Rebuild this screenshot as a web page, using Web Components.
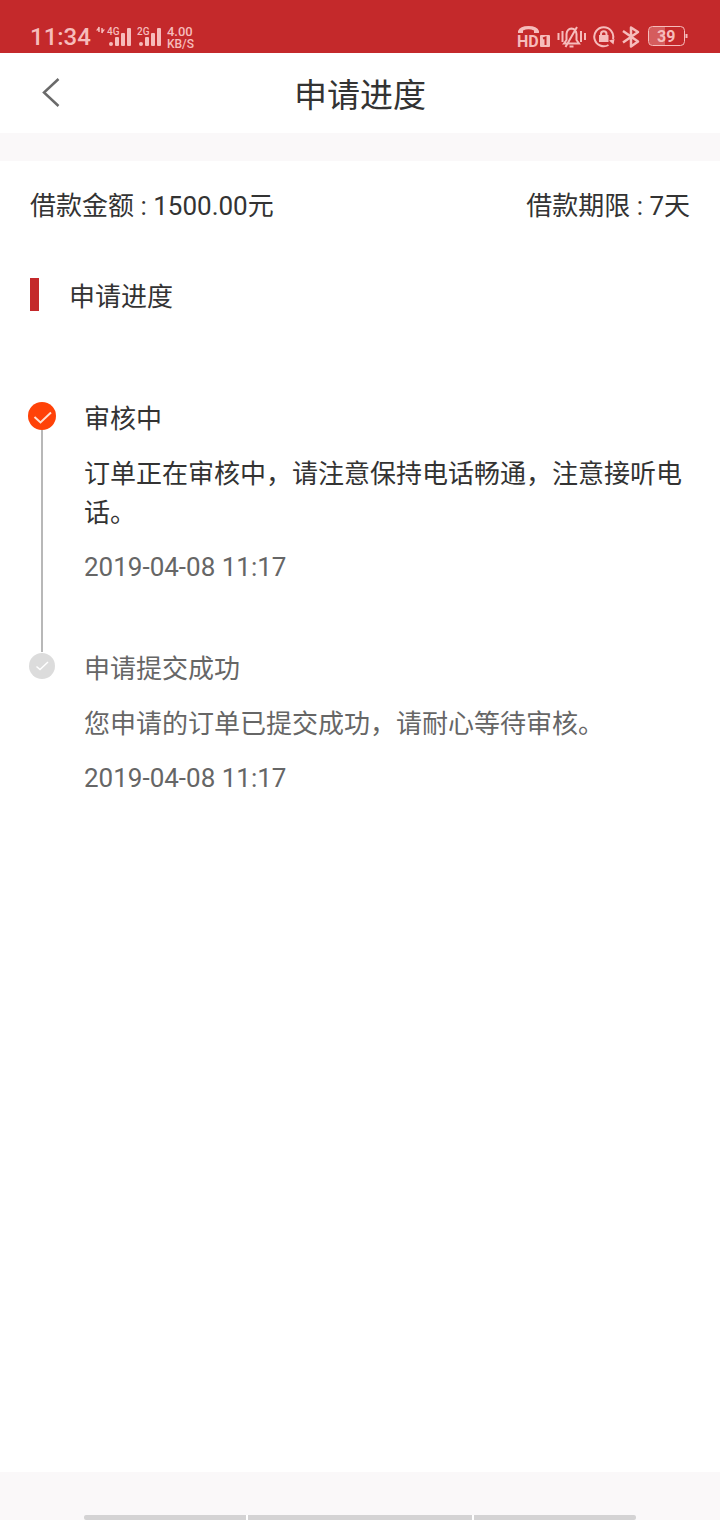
<!DOCTYPE html>
<html lang="zh-CN">
<head>
<meta charset="utf-8">
<meta name="viewport" content="width=device-width, initial-scale=1">
<title>申请进度</title>
<style>
  body {
    margin: 0;
    background: #faf8f9;
    color: #333;
    font: 26px/39px Roboto, "Noto Sans CJK SC", sans-serif;
  }
</style>
</head>
<body>
<progress-page></progress-page>

<script>
class StatusSignal extends HTMLElement {
    constructor() {
        super();
        this.attachShadow({ mode: "open" });
    }

    connectedCallback() {
        const label = this.getAttribute("label");
        const arrows = this.hasAttribute("active")
            ? `<path d="M3 4v5M6 5v5" stroke="currentColor" stroke-width="1.500"/><path d="M0 7.500l3-4v4zM9 6.500l-3 4v-4z"/>`
            : "";
        const width = arrows ? 36 : 25;
        const x = arrows ? 11 : 0;
        this.shadowRoot.innerHTML = `
      <style>
        :host { display: block; height: 28px; }
        svg { display: block; fill: currentColor; }
        text { font: 500 10px Roboto, sans-serif; }
      </style>
      <svg width="${width}" height="28" viewBox="0 0 ${width} 28">
        ${arrows}
        <g transform="translate(${x} 0)">
          <text x="0" y="12">${label}</text>
          <rect x="2" y="19" width="4" height="4" rx="2"/>
          <rect x="8" y="14" width="4" height="9" rx="1"/>
          <rect x="14" y="10" width="4" height="13" rx="1"/>
          <rect x="20" y="5" width="4" height="18" rx="1"/>
        </g>
      </svg>
    `;
    }
}

class StatusBar extends HTMLElement {
    constructor() {
        super();
        this.attachShadow({ mode: "open" });
        this.shadowRoot.innerHTML = `
      <style>
        :host {
          display: flex;
          justify-content: space-between;
          padding: 23px 32px 2px 30px;
          background: #c4292b;
          color: #f6bcbb;
          line-height: 28px;
        }
        .side { display: flex; }
        .left { gap: 5px; }
        .right { gap: 7px; }
        .time { font-size: 24px; font-weight: 500; }
        .speed { display: flex; flex-direction: column; font-size: 13px; font-weight: 500; line-height: 13px; padding-top: 2px; }
        .speed .unit { font-size: 12px; line-height: 12px; }
        svg { display: block; fill: none; stroke: currentColor; stroke-width: 2; }
        text { font-family: Roboto, sans-serif; font-weight: 700; font-size: 16px; fill: currentColor; stroke: none; }
        .fill { fill: currentColor; stroke: none; }
      </style>
      <div class="side left">
        <span class="time">11:34</span>
        <status-signal label="4G" active></status-signal>
        <status-signal label="2G"></status-signal>
        <span class="speed"><span>4.00</span><span class="unit">KB/S</span></span>
      </div>
      <div class="side right">
        <!-- HD voice -->
        <svg width="33" height="28" viewBox="0 0 33 28">
          <path class="fill" d="M1 8Q3 3 11.500 3T22 8V10H17V7.500Q11.500 5 6 7.500V10H1Z"/>
          <text x="0" y="24">HD</text>
          <rect class="fill" x="23" y="12" width="10" height="12" rx="1"/>
          <path d="M26 15.500L28.500 14.500V22" stroke="#c4292b"/>
        </svg>
        <!-- silent -->
        <svg width="29" height="28" viewBox="0 0 29 28">
          <path d="M1.500 10v7M5.500 8v11M24 8v11M28 10v7"/>
          <path d="M7 20.500L9.500 17V11Q10 6 14.500 5.500Q19 6 19.500 11V17L22 20.500ZM12.500 23.500h4M20 4L8.500 24"/>
        </svg>
        <!-- rotation lock -->
        <svg width="22" height="28" viewBox="0 0 22 28">
          <path d="M15.500 22A9.500 9.500 0 1 1 20 16"/>
          <path class="fill" d="M16 17.500l5.500-1.500-1 5.500zM6 12h9.500v7H6z"/>
          <path d="M8 12.500V11a2.700 2.700 0 0 1 5.500 0v1.500"/>
        </svg>
        <!-- bluetooth -->
        <svg width="19" height="28" viewBox="0 0 19 28" stroke-linejoin="round">
          <path stroke-width="2.500" d="M1 8L16 18.500L9 23.500V4.500L16 9L1 19.500"/>
        </svg>
        <!-- battery -->
        <svg width="40" height="28" viewBox="0 0 40 28">
          <path class="fill" d="M5 4H17V22H5Q1 22 1 18V8Q1 4 5 4Z" opacity=".35"/>
          <rect x="0.500" y="3.500" width="36" height="19" rx="4" style="stroke-width: 1px"/>
          <path d="M38.500 11v4"/>
          <text x="9" y="19">39</text>
        </svg>
      </div>
    `;
    }
}

class NavHeader extends HTMLElement {
    constructor() {
        super();
        this.attachShadow({ mode: "open" });
        this.shadowRoot.innerHTML = `
      <style>
        :host {
          display: grid;
          grid-template-columns: 100px 1fr 100px;
          background: #fff;
        }
        button {
          display: flex;
          align-items: center;
          padding: 0 0 0 40px;
          border: 0;
          background: none;
          color: #6a6a6a;
          cursor: pointer;
        }
        h1 { margin: 0; padding-top: 6px; font-size: 33px; font-weight: 400; line-height: 74px; text-align: center; }
      </style>
      <button type="button" aria-label="返回">
        <svg width="22" height="32" viewBox="0 0 22 32" fill="none" stroke="currentColor" stroke-width="2.500">
          <path d="M18.500 2L4 15.500L18.500 29"/>
        </svg>
      </button>
      <h1><slot></slot></h1>
    `;
    }
}

class LoanSummary extends HTMLElement {
    constructor() {
        super();
        this.attachShadow({ mode: "open" });
        this.shadowRoot.innerHTML = `
      <style>
        :host { display: flex; justify-content: space-between; padding: 26px 30px 0; }
      </style>
      <slot></slot>
    `;
    }
}

class SectionTitle extends HTMLElement {
    constructor() {
        super();
        this.attachShadow({ mode: "open" });
        this.shadowRoot.innerHTML = `
      <style>
        :host { display: block; padding: 52px 30px 0; }
        h2 { display: flex; gap: 30px; margin: 0; font-size: 26px; font-weight: 400; }
        h2::before { content: ""; width: 9px; height: 33px; background: #c4292b; }
      </style>
      <h2><slot></slot></h2>
    `;
    }
}

class TimelineStep extends HTMLElement {
    constructor() {
        super();
        this.attachShadow({ mode: "open" });
    }

    connectedCallback() {
        const icon = this.hasAttribute("current")
            ? `<circle cx="14" cy="14" r="14" fill="#ff4208"/>
               <path d="M6.500 15L12.500 20.500L23 10.500" stroke="#ffe0d2" stroke-width="2"/>`
            : `<circle cx="14" cy="14" r="13" fill="#dcdcdc"/>
               <path d="M8.500 14.500L12 17.500L20 10" stroke="#fff" stroke-width="1.500"/>`;
        this.shadowRoot.innerHTML = `
      <style>
        :host { display: flex; gap: 28px; color: #666; }
        :host([current]) { color: #333; }
        .marker { display: flex; flex-direction: column; align-items: center; }
        svg { display: block; fill: none; }
        .line { flex: 1; width: 2px; background: #b8b8b8; }
        .body { flex: 1; padding-bottom: 65px; }
        :host(:last-of-type) .line { display: none; }
        h3, p { margin: 0; font-size: 26px; font-weight: 400; }
        h3 { line-height: 35px; }
        p { margin-top: 18px; }
        time { display: block; margin-top: 15px; color: #666; }
      </style>
      <div class="marker">
        <svg width="28" height="28" viewBox="0 0 28 28">${icon}</svg>
        <div class="line"></div>
      </div>
      <div class="body">
        <h3><slot name="title"></slot></h3>
        <p><slot></slot></p>
        <time><slot name="time"></slot></time>
      </div>
    `;
    }
}

class GestureBar extends HTMLElement {
    constructor() {
        super();
        this.attachShadow({ mode: "open" });
        this.shadowRoot.innerHTML = `
      <style>
        :host { display: flex; height: 5px; padding: 43px 84px 0; }
        div { display: flex; flex: 1; gap: 2px; background: #fff; border-radius: 2px; overflow: hidden; }
        span { flex: 162; background: #d4d3d4; }
        .home { flex: 224; }
      </style>
      <div><span></span><span class="home"></span><span></span></div>
    `;
    }
}

class ProgressPage extends HTMLElement {
    constructor() {
        super();
        this.attachShadow({ mode: "open" });
        this.shadowRoot.innerHTML = `
      <style>
        :host { display: flex; flex-direction: column; min-height: 100vh; }
        main { flex: 1; margin-top: 28px; background: #fff; }
        .timeline { padding: 85px 30px 0 28px; }
      </style>
      <status-bar></status-bar>
      <nav-header>申请进度</nav-header>
      <main>
        <loan-summary>
          <span>借款金额 : 1500.00元</span>
          <span>借款期限 : 7天</span>
        </loan-summary>
        <section-title>申请进度</section-title>
        <div class="timeline">
          <timeline-step current>
            <span slot="title">审核中</span>
            订单正在审核中，请注意保持电话畅通，注意接听电话。
            <span slot="time">2019-04-08 11:17</span>
          </timeline-step>
          <timeline-step>
            <span slot="title">申请提交成功</span>
            您申请的订单已提交成功，请耐心等待审核。
            <span slot="time">2019-04-08 11:17</span>
          </timeline-step>
        </div>
      </main>
      <gesture-bar></gesture-bar>
    `;
    }
}

customElements.define("status-signal", StatusSignal);
customElements.define("status-bar", StatusBar);
customElements.define("nav-header", NavHeader);
customElements.define("loan-summary", LoanSummary);
customElements.define("section-title", SectionTitle);
customElements.define("timeline-step", TimelineStep);
customElements.define("gesture-bar", GestureBar);
customElements.define("progress-page", ProgressPage);
</script>
</body>
</html>
